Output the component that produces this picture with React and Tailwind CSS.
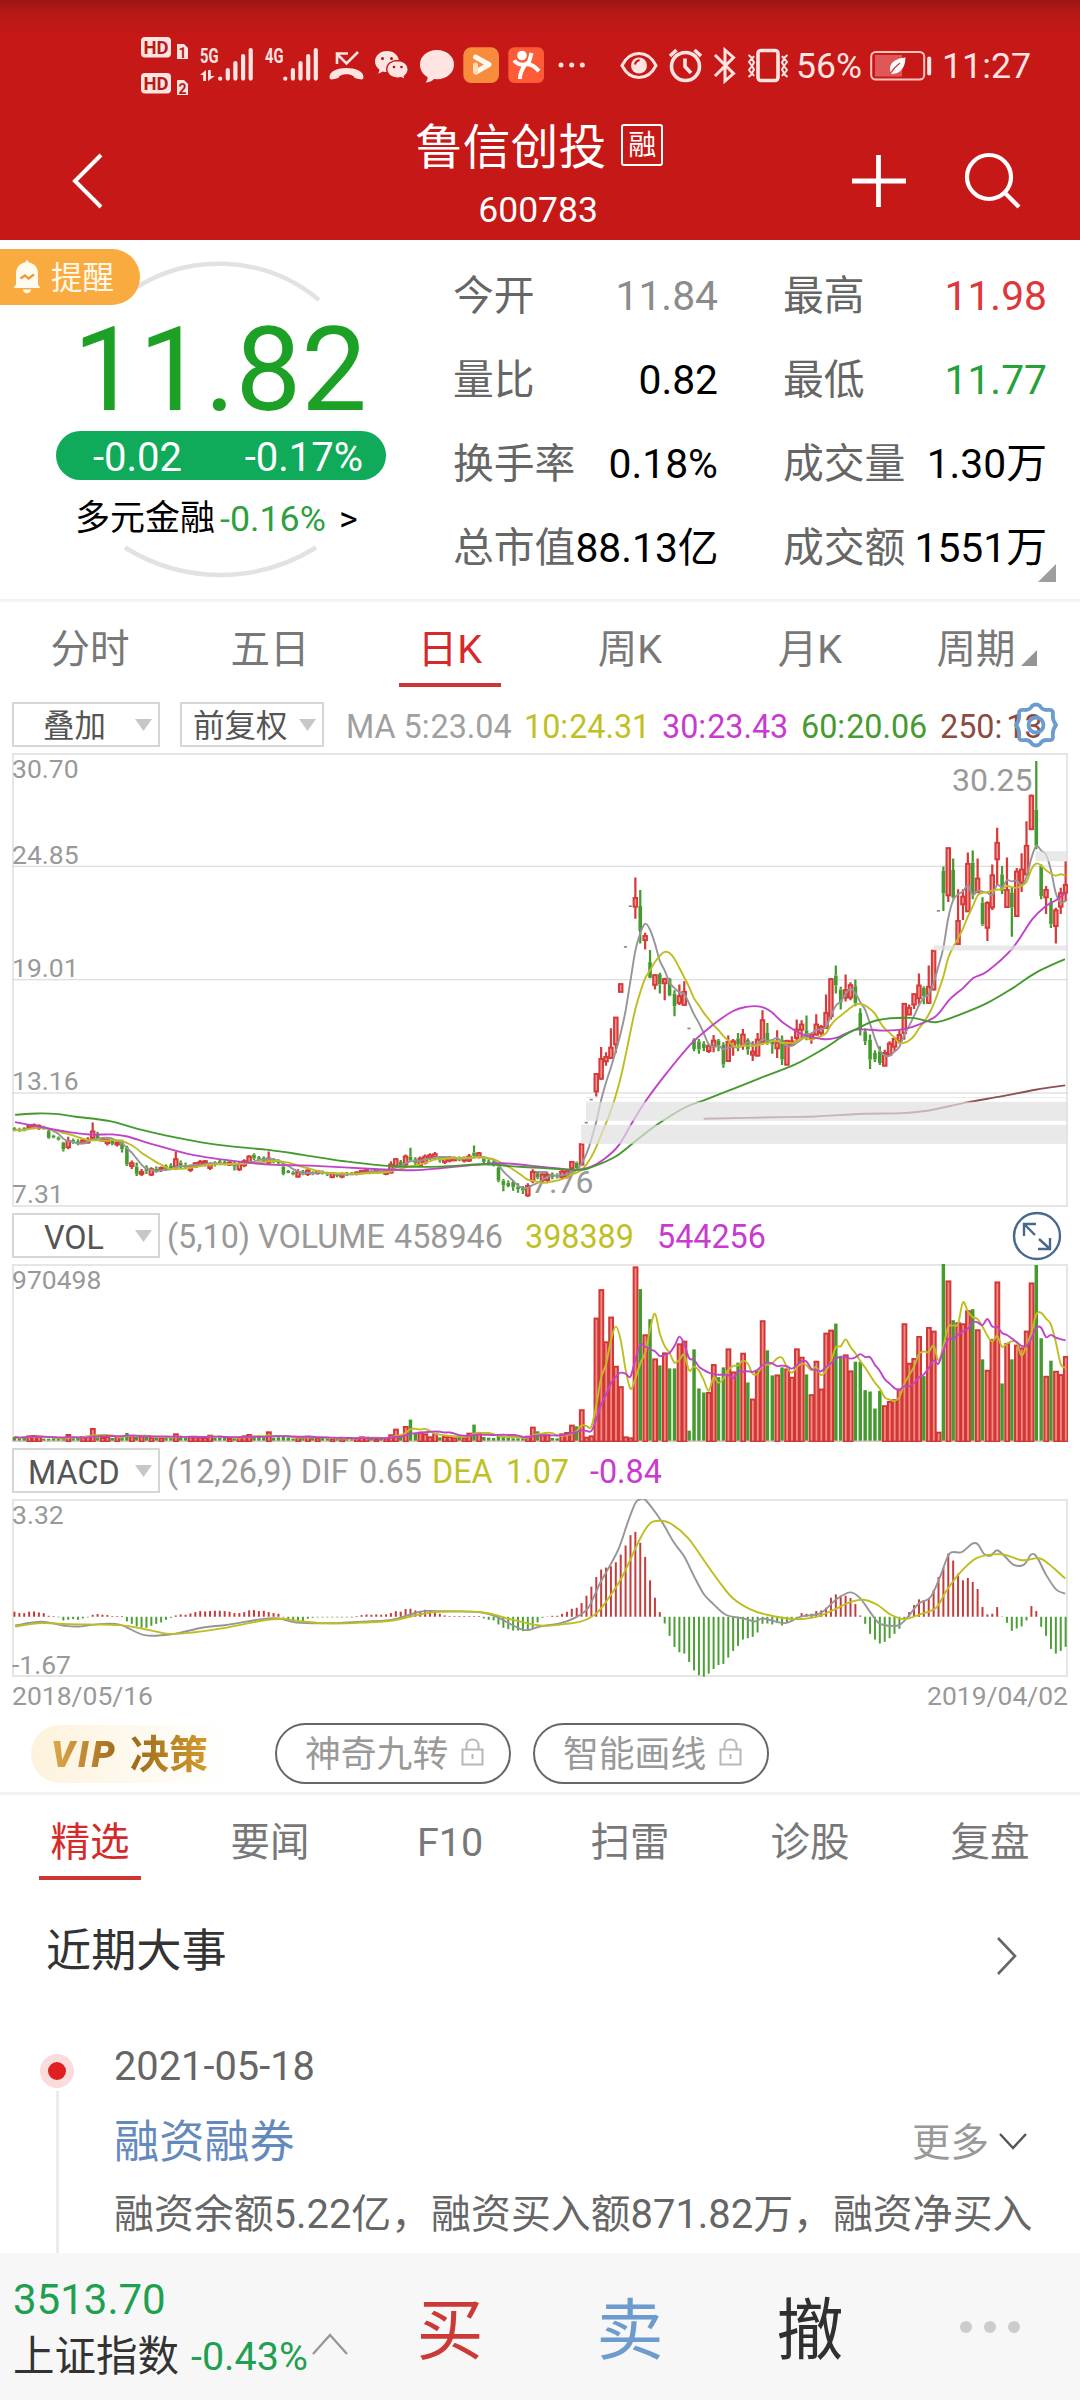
import React from "react";

const RED = "#d63a3a";
const GREEN = "#449a2e";
const GRAY = "#96969a";
const YELLOW = "#bebe20";
const PURPLE = "#c044c8";

// chart space: 216 bars, 14.2 units each, starting at x = 35
const STEP = 14.2;
const cx = (i) => 35 + STEP * (i + 0.5);

// r = up, g = down, d/e = limit day without a body; high, top, bottom, low
const candles = `
g1162,1165,1170,1174 g1164,1167,1172,1176 g1162,1165,1170,1174 r1153,1157,1164,1170 r1151,1156,1163,1168 r1154,1158,1165,1170 g1158,1161,1168,1170 g1170,1174,1194,1197
g1185,1187,1193,1195 g1190,1193,1199,1202 g1206,1208,1228,1235 r1191,1204,1222,1228 g1196,1200,1208,1212 g1198,1204,1212,1216 r1196,1202,1210,1212 r1192,1200,1208,1211
r1148,1175,1194,1198 g1176,1184,1196,1200 r1194,1197,1202,1206 r1196,1201,1210,1217 g1198,1202,1212,1216 r1202,1208,1214,1220 g1200,1206,1228,1238 g1218,1222,1274,1278
r1262,1270,1278,1287 g1268,1280,1302,1308 r1287,1296,1302,1308 g1276,1282,1294,1302 r1282,1288,1304,1308 g1280,1286,1294,1298 r1280,1284,1290,1296 g1274,1278,1288,1293
g1270,1276,1286,1290 r1235,1258,1280,1290 g1262,1268,1278,1286 g1268,1274,1284,1288 r1274,1280,1290,1296 r1266,1270,1280,1284 r1260,1266,1274,1278 r1260,1264,1270,1280
r1268,1274,1284,1290 g1264,1268,1276,1280 g1260,1264,1272,1276 g1262,1266,1272,1276 r1264,1268,1274,1278 g1266,1270,1280,1292 r1266,1272,1288,1293 r1258,1264,1276,1282
r1246,1250,1266,1270 g1240,1244,1256,1260 g1248,1252,1258,1262 g1250,1254,1264,1268 r1235,1256,1268,1272 g1254,1258,1264,1270 g1258,1262,1270,1274 g1274,1280,1302,1306
g1290,1293,1299,1300 g1294,1297,1303,1306 r1288,1296,1310,1313 g1290,1294,1304,1306 r1288,1292,1302,1308 g1294,1297,1303,1306 r1290,1294,1300,1304 g1292,1295,1300,1304
g1296,1299,1304,1308 r1296,1300,1311,1315 g1300,1303,1308,1312 r1298,1302,1310,1315 g1296,1300,1304,1308 g1296,1299,1303,1306 r1294,1298,1302,1306 r1290,1293,1300,1302
r1286,1291,1297,1300 g1290,1292,1296,1300 r1290,1293,1298,1301 g1290,1292,1297,1300 r1288,1292,1302,1306 r1264,1274,1298,1300 r1254,1258,1278,1282 g1260,1266,1278,1282
r1244,1250,1274,1280 g1224,1250,1262,1264 g1252,1258,1270,1276 r1250,1256,1276,1280 r1244,1250,1268,1274 r1240,1246,1254,1260 r1236,1243,1252,1258 g1248,1252,1262,1268
r1250,1256,1266,1272 r1248,1254,1262,1268 r1250,1255,1261,1264 g1250,1254,1260,1264 r1250,1254,1262,1268 r1242,1250,1262,1266 g1217,1238,1248,1252 r1236,1240,1250,1256
g1250,1254,1266,1274 g1258,1264,1272,1276 g1262,1266,1276,1280 g1280,1284,1322,1327 g1317,1322,1336,1354 g1322,1328,1338,1342 g1322,1326,1342,1352 g1330,1340,1348,1358
g1338,1342,1352,1362 r1330,1338,1366,1371 r1288,1296,1322,1330 g1296,1300,1312,1318 r1300,1304,1320,1328 r1298,1305,1320,1330 g1298,1302,1312,1318 g1300,1304,1312,1316
r1290,1295,1312,1320 r1288,1294,1310,1316 r1263,1266,1285,1292 g1265,1268,1285,1288 r1210,1213,1274,1276 d1149 d1080 r1000,1003,1055,1070
r922,958,1017,1020 r938,952,965,978 r866,924,955,957 r832,834,914,940 r732,734,757,757 d623 d501 r415,476,502,538
g452,500,575,612 r580,590,602,630 g632,668,715,716 r705,707,736,750 g700,704,735,762 r715,719,731,782 g715,718,768,770 g752,762,800,830
r735,770,790,796 r725,757,796,797 e867 g896,900,928,935 g898,905,930,942 g905,912,925,935 r912,919,934,940 r886,903,920,938
g898,902,918,935 g908,915,975,984 r888,907,964,967 r898,905,918,948 g880,896,915,935 r868,885,917,930 g896,900,930,945 r905,936,945,964
r880,900,948,950 r812,842,908,915 g850,880,910,915 g898,903,915,942 r872,909,926,955 g888,900,960,976 r900,904,975,977 r890,905,915,920
r840,870,895,905 r842,855,870,900 g828,872,890,902 r880,885,895,912 r824,855,885,888 r856,862,880,888 r765,820,865,868 r716,719,830,840
g678,708,738,762 g742,750,790,810 r705,752,774,786 r728,737,774,782 g720,740,790,800 g806,820,870,888 g866,875,905,916 g885,900,960,988
g932,940,960,967 g920,935,970,976 r930,940,978,979 r905,912,945,948 r892,898,921,935 r870,886,905,912 r790,793,880,900 r795,805,825,826
r762,764,795,808 r702,738,776,794 g740,745,770,794 r678,742,790,792 r632,634,750,752 d515 g382,395,462,515 r325,327,468,488
g358,392,475,478 r450,545,614,616 r450,472,495,542 r340,374,516,518 g334,370,465,480 r358,418,458,462 g474,490,555,560 r486,491,565,605
r376,408,504,512 r266,311,360,440 g380,405,455,464 r355,452,503,505 g445,460,505,592 r386,397,530,532 r342,391,430,458 r246,320,405,410
r166,170,270,272 g66,212,320,330 g376,380,470,480 r440,452,474,524 g476,490,555,566 r505,513,560,612 r445,462,502,524 r366,437,460,486`
    .trim()
    .split(/\s+/)
    .map((s) => {
        const v = s.slice(1).split(",").map(Number);
        const kind = s[0];
        return {
            kind,
            up: kind === "r" || kind === "d",
            high: v[0],
            top: v[1],
            bottom: v[2],
            low: v[3],
            close: v.length === 1 ? v[0] : kind === "r" ? v[1] : v[2],
        };
    });

const volumes = [
    712, 716, 711, 708, 707, 710, 717, 717, 716, 716, 716, 704, 716, 715, 710, 709, 686, 713, 713, 710, 715, 711, 712, 700,
    708, 712, 708, 711, 713, 713, 714, 714, 715, 702, 712, 715, 711, 711, 712, 713, 706, 714, 711, 715, 716, 716, 712, 708,
    704, 712, 710, 713, 696, 714, 713, 712, 713, 717, 712, 714, 709, 713, 714, 715, 717, 716, 718, 715, 718, 717, 715, 711,
    712, 717, 717, 716, 715, 705, 688, 710, 680, 660, 700, 697, 702, 711, 702, 713, 710, 710, 714, 708, 714, 700, 675, 700,
    712, 714, 715, 704, 712, 714, 716, 716, 715, 709, 682, 695, 705, 705, 715, 716, 702, 698, 676, 680, 630, 712, 708, 356,
    271, 427, 353, 500, 561, 711, 714, 203, 270, 406, 360, 478, 498, 460, 507, 507, 433, 425, 693, 450, 567, 579, 578, 495,
    533, 504, 448, 517, 490, 461, 549, 598, 515, 364, 453, 528, 526, 504, 508, 533, 448, 473, 525, 585, 485, 568, 401, 392,
    373, 470, 466, 514, 487, 487, 572, 576, 627, 574, 618, 605, 600, 568, 373, 491, 477, 411, 530, 384, 395, 697, 195, 245,
    363, 370, 373, 334, 330, 391, 480, 512, 420, 248, 552, 432, 480, 437, 445, 395, 251, 198, 417, 530, 484, 515, 525, 471,
];

const macdBars = [
    1236, 1240, 1240, 1236, 1235, 1238, 1240, 1248, 1249, 1253, 1262, 1260, 1258, 1260, 1256, 1253, 1245, 1243, 1245, 1246, 1249, 1249, 1249, 1265,
    1272, 1280, 1284, 1284, 1278, 1272, 1268, 1260, 1254, 1247, 1244, 1245, 1241, 1237, 1234, 1235, 1234, 1233, 1233, 1234, 1236, 1240, 1240, 1237,
    1232, 1231, 1234, 1233, 1237, 1240, 1242, 1253, 1260, 1264, 1262, 1264, 1257, 1254, 1253, 1253, 1253, 1253, 1253, 1253, 1253, 1253, 1249, 1246,
    1244, 1245, 1244, 1245, 1244, 1240, 1234, 1236, 1228, 1227, 1232, 1234, 1230, 1232, 1238, 1242, 1247, 1249, 1249, 1249, 1249, 1249, 1249, 1249,
    1256, 1260, 1262, 1274, 1284, 1288, 1292, 1292, 1294, 1293, 1284, 1268, 1254, 1250, 1248, 1248, 1242, 1236, 1227, 1224, 1210, 1188, 1161, 1132,
    1110, 1104, 1100, 1088, 1065, 1038, 1007, 997, 1030, 1072, 1142, 1194, 1237, 1271, 1308, 1341, 1357, 1361, 1386, 1411, 1426, 1430, 1421, 1407,
    1395, 1392, 1373, 1353, 1338, 1319, 1315, 1311, 1298, 1272, 1271, 1274, 1270, 1277, 1270, 1265, 1256, 1240, 1242, 1242, 1234, 1232, 1224, 1194,
    1184, 1188, 1188, 1195, 1213, 1247, 1272, 1302, 1319, 1331, 1326, 1315, 1302, 1287, 1260, 1237, 1216, 1199, 1201, 1196, 1171, 1132, 1104, 1062,
    1083, 1122, 1142, 1135, 1147, 1168, 1222, 1244, 1242, 1222, 1250, 1269, 1293, 1286, 1280, 1262, 1219, 1234, 1281, 1308, 1347, 1361, 1353, 1341,
];

const ma30 = "44,1147 120,1162 200,1177 260,1184 330,1184 370,1190 450,1215 560,1245 700,1266 800,1275 900,1277 1100,1288 1200,1291 1280,1285 1380,1275 1460,1270 1568,1280 1668,1290 1713,1282 1758,1255 1798,1215 1838,1145 1878,1080 1938,998 2008,912 2068,858 2128,815 2168,802 2208,801 2238,815 2278,852 2328,883 2388,898 2428,895 2488,870 2568,873 2628,868 2668,855 2718,830 2758,780 2798,745 2828,715 2868,695 2938,630 2998,540 3038,500 3068,482 3094,462";
const ma60 = "44,1125 110,1121 170,1123 220,1131 320,1144 400,1167 520,1195 640,1216 780,1230 880,1245 1000,1264 1140,1279 1280,1280 1400,1273 1500,1280 1568,1284 1678,1290 1718,1282 1788,1250 1848,1202 1908,1155 1988,1104 2048,1080 2128,1048 2208,1015 2308,975 2388,930 2448,890 2488,868 2548,842 2648,835 2718,848 2788,825 2868,790 2938,748 3008,700 3093,659";
const ma250 = "2044,1137 2268,1132 2368,1130 2508,1122 2618,1120 2698,1112 2808,1088 2908,1070 3008,1050 3094,1037";
const dif = "44,1277 120,1266 190,1278 230,1280 290,1273 350,1275 420,1306 500,1303 590,1283 660,1275 760,1258 810,1256 860,1268 960,1270 1080,1264 1140,1260 1220,1236 1270,1234 1390,1237 1440,1250 1520,1290 1568,1280 1628,1270 1668,1255 1708,1225 1743,1150 1768,1105 1798,1045 1823,970 1845,912 1859,900 1874,901 1903,938 1930,980 1958,1030 1987,1070 2015,1128 2044,1183 2072,1213 2108,1245 2158,1256 2193,1265 2218,1256 2278,1270 2328,1250 2383,1240 2428,1200 2468,1178 2498,1195 2528,1238 2553,1270 2583,1278 2613,1275 2638,1250 2668,1212 2703,1192 2733,1125 2758,1062 2793,1058 2823,1033 2840,1034 2858,1063 2878,1068 2896,1052 2918,1070 2943,1095 2973,1096 2996,1064 3013,1075 3038,1125 3068,1170 3094,1182";
const dea = "44,1280 120,1270 200,1273 350,1276 430,1290 490,1302 560,1298 650,1285 760,1263 820,1257 870,1264 960,1271 1060,1268 1140,1262 1220,1244 1280,1236 1400,1237 1470,1255 1568,1277 1628,1274 1688,1265 1733,1240 1768,1195 1808,1130 1858,1020 1888,972 1918,964 1948,972 1998,1015 2043,1080 2088,1145 2128,1195 2178,1228 2228,1245 2308,1258 2368,1252 2418,1232 2468,1208 2508,1200 2548,1215 2588,1245 2628,1258 2668,1245 2718,1225 2748,1175 2788,1120 2838,1075 2908,1064 2968,1082 3018,1076 3048,1095 3094,1137";

const parse = (s) => s.split(" ").map((p) => p.split(",").map(Number));

// moving average over the last n values, drawn at each bar's centre
const average = (values, n) =>
    values.map((_, i) => {
        const part = values.slice(Math.max(0, i - n + 1), i + 1);
        return [cx(i), part.reduce((a, b) => a + b, 0) / part.length];
    });

const smooth = (pts) => {
    let d = `M${pts[0][0]} ${pts[0][1]}`;
    for (let i = 0; i < pts.length - 1; i++) {
        const a = pts[i - 1] || pts[i];
        const b = pts[i];
        const c = pts[i + 1];
        const e = pts[i + 2] || c;
        d += `C${b[0] + (c[0] - a[0]) / 6} ${b[1] + (c[1] - a[1]) / 6} ${c[0] - (e[0] - b[0]) / 6} ${c[1] - (e[1] - b[1]) / 6} ${c[0]} ${c[1]}`;
    }
    return d;
};

const Line = ({ points, color }) => (
    <path d={smooth(points)} fill="none" stroke={color} strokeWidth="5.6" strokeLinejoin="round" />
);

const Plot = ({ viewBox, children }) => (
    <svg className="absolute left-[-2px] top-[-2px] w-[calc(100%+4px)] h-[calc(100%+4px)]" viewBox={viewBox} preserveAspectRatio="none">
        {children}
    </svg>
);

const closes = candles.map((c) => c.close);

const PriceChart = () => (
    <Plot viewBox="35 42 3067 1359">
        {[381, 721, 1060].map((y) => (
            <path key={y} d={`M35 ${y}H3102`} stroke="#d4d4d4" strokeWidth="3" />
        ))}
        <path d="M1702 1073H3102" stroke="#ebebeb" strokeWidth="3" />
        {candles.map((c, i) => {
            const x = cx(i);
            if (c.kind === "d" || c.kind === "e") {
                return <rect key={i} x={x - 5} y={c.high - 3} width="9" height="5" fill="#8a8a8a" />;
            }
            const color = c.up ? RED : GREEN;
            return (
                <g key={i}>
                    <path d={`M${x} ${c.high}V${c.top}M${x} ${c.bottom}V${c.low}`} stroke={color} strokeWidth="6.5" />
                    {c.up ? (
                        <rect x={x - 5} y={c.top} width="10" height={Math.max(c.bottom - c.top, 4)} fill="#f9a097" stroke={color} strokeWidth="6" />
                    ) : (
                        <rect x={x - 5.2} y={c.top} width="10.4" height={c.bottom - c.top} fill={color} />
                    )}
                </g>
            );
        })}
        <Line points={average(closes, 5)} color={GRAY} />
        <Line points={average(closes, 10)} color={YELLOW} />
        <Line points={parse(ma30)} color={PURPLE} />
        <Line points={parse(ma60)} color={GREEN} />
        <Line points={parse(ma250)} color="#8e5050" />
        <g fill="#e0e0e0" fillOpacity="0.7">
            <rect x="1702" y="1086" width="1400" height="57" />
            <rect x="1688" y="1155" width="1414" height="57" />
            <rect x="2713" y="618" width="389" height="15" />
            <rect x="3008" y="336" width="94" height="30" />
        </g>
    </Plot>
);

const VolumeChart = () => (
    <Plot viewBox="35 195 3067 532">
        {volumes.map((y, i) =>
            candles[i].up ? (
                <rect key={i} x={cx(i) - 5} y={y + 2} width="11" height={724 - y} fill="#f58a80" stroke="#d03838" strokeWidth="5.8" />
            ) : (
                <rect key={i} x={cx(i) - 5} y={y} width="10" height={723 - y} fill={GREEN} />
            )
        )}
        <path d="M35 725H3102" stroke="#c43c3c" strokeWidth="2" strokeOpacity="0.35" />
        <Line points={average(volumes, 5)} color={YELLOW} />
        <Line points={average(volumes, 10)} color={PURPLE} />
    </Plot>
);

const MacdChart = () => (
    <Plot viewBox="35 899 3067 532">
        {macdBars.map((y, i) => (
            <path key={i} d={`M${cx(i)} 1251V${y}`} stroke={y < 1251 ? "#c43c3c" : "#4c9f35"} strokeWidth="5.8" />
        ))}
        <Line points={parse(dif)} color={GRAY} />
        <Line points={parse(dea)} color={YELLOW} />
    </Plot>
);

const SignalBars = ({ x }) => (
    <g stroke="#ffe4e2" strokeWidth="4.2" strokeLinecap="round">
        <path d={`M${x} 78.6v.1M${x + 7.6} 70v8.6M${x + 15.2} 63v15.6M${x + 22.9} 56v22.6M${x + 30.5} 50v28.6`} />
    </g>
);

const StatusBar = () => (
    <div className="flex h-[64px] mt-[34px] pl-[138px] text-[#ffe4e2]">
        <svg width="54" height="64" viewBox="138 34 54 64" fill="#ffe4e2">
            <rect x="141" y="37" width="30" height="20.5" rx="4" />
            <rect x="141" y="73" width="30" height="20.5" rx="4" />
            <path d="M177 44h7l4 4v11h-11zM177 80h7l4 4v11h-11z" />
            <g fill="#b81a18" fontFamily="Roboto" fontWeight="700">
                <text x="143.5" y="53.8" fontSize="18.5">HD</text>
                <text x="143.5" y="89.8" fontSize="18.5">HD</text>
                <text x="178.5" y="57.5" fontSize="14">1</text>
                <text x="178.5" y="93.5" fontSize="14">2</text>
            </g>
        </svg>
        <svg width="66" height="64" viewBox="192 34 66 64" fill="#ffe4e2">
            <text x="200" y="62.5" fontSize="20" fontWeight="700" fontFamily="Roboto" textLength="18.5" lengthAdjust="spacingAndGlyphs">5G</text>
            <path d="M200 75l6-5v11h-2.800v-6zM208 70h2.800v6h4l-6.800 5z" />
            <SignalBars x={220.2} />
        </svg>
        <svg width="64" height="64" viewBox="258 34 64 64" fill="#ffe4e2">
            <text x="265" y="62.5" fontSize="20" fontWeight="700" fontFamily="Roboto" textLength="18.5" lengthAdjust="spacingAndGlyphs">4G</text>
            <SignalBars x={285.3} />
        </svg>
        <svg width="48" height="64" viewBox="322 34 48 64" fill="none" stroke="#ffe4e2" strokeWidth="2.6">
            <path d="M337 64V53.500h11M337 54l9.500 9.500L358 52" />
            <path d="M329.500 77c0-12 34-12 34 0 0 3-2 3-9 1-1.500-5-14.500-5-16 0-7 2-9 2-9-1z" fill="#ffe4e2" stroke="none" />
        </svg>
        <svg width="46" height="64" viewBox="370 34 46 64" fill="#ffe4e2">
            <path d="M387 51c-7 0-12 5-12 10.500 0 3.500 2 6.200 4.500 8.200l-1.200 4 4.500-2.300c1.200.4 2.700.6 4.200.6 7 0 12-5 12-10.500S394 51 387 51z" />
            <path d="M397.500 60.500c-6.300 0-10.800 4-10.800 8.800s4.500 8.900 10.800 8.900c1.300 0 2.600-.2 3.800-.5l4 2-1-3.500c2.400-1.700 3.900-4.100 3.900-6.900 0-4.800-4.500-8.800-10.700-8.800z" stroke="#c61817" strokeWidth="1.3" />
            <g fill="#9b1a18">
                <circle cx="382.5" cy="58.5" r="1.5" />
                <circle cx="391.5" cy="58.5" r="1.5" />
                <circle cx="394" cy="67" r="1.3" />
                <circle cx="401.5" cy="67" r="1.3" />
            </g>
        </svg>
        <svg width="44" height="64" viewBox="416 34 44 64" fill="#ffe4e2">
            <path d="M437 50c-10 0-17 6.500-17 14.500 0 5.500 3 10 7.500 12.500.3 2-.5 4-2 5.500 3.500 0 6.500-1.500 8.500-3.500l3 .2c10 0 17-6.700 17-14.700S447 50 437 50z" />
        </svg>
        <svg width="44" height="64" viewBox="460 34 44 64" fill="none">
            <rect x="463.3" y="47.3" width="35.7" height="35.7" rx="8" fill="#f98b3d" />
            <path d="M475.500 57l13.500 7.500-13 7.500" stroke="#fff8ee" strokeWidth="5" strokeLinejoin="round" strokeLinecap="round" />
            <path d="M475.500 72v-7" stroke="#ffdcb8" strokeWidth="5" strokeLinecap="round" />
        </svg>
        <svg width="46" height="64" viewBox="504 34 46 64" fill="none">
            <rect x="508.3" y="47.3" width="35.7" height="35.7" rx="6" fill="#fd5c36" />
            <circle cx="522" cy="55.5" r="4.8" fill="#fff" />
            <path d="M514 60.500c5 5.500 11 5.500 15 1.500l2.500-9M525 65c-3 4-5 8-5 14M526 64c6 0 9 3 13 7" stroke="#fff" strokeWidth="4" strokeLinejoin="round" />
        </svg>
        <svg width="66" height="64" viewBox="550 34 66 64" fill="#ffe4e2">
            <circle cx="561" cy="65" r="2.5" />
            <circle cx="571.7" cy="65" r="2.5" />
            <circle cx="582.3" cy="65" r="2.5" />
        </svg>
        <svg width="48" height="64" viewBox="616 34 48 64" fill="none" stroke="#ffe4e2" strokeWidth="3">
            <path d="M622 65.500c8-16 26-16 34 0-8 16-26 16-34 0z" />
            <circle cx="639" cy="65.5" r="8" fill="#ffe4e2" stroke="none" />
            <path d="M635 64.500c.5-2.500 2-4 4.500-4.500" stroke="#c61817" strokeWidth="2" />
        </svg>
        <svg width="46" height="64" viewBox="664 34 46 64" fill="none" stroke="#ffe4e2" strokeWidth="3.6">
            <circle cx="685.5" cy="66.5" r="14" />
            <path d="M685 58.500v8l6 6.500M670 56l6.500-6M701 56l-6.500-6" />
        </svg>
        <svg width="32" height="64" viewBox="710 34 32 64" fill="none" stroke="#ffe4e2" strokeWidth="3">
            <path d="M715 55l18.500 18.500-8.500 7.500V50l8.500 7.500L715 76" />
        </svg>
        <svg width="54" height="64" viewBox="742 34 54 64" fill="none" stroke="#ffe4e2" strokeWidth="3">
            <rect x="758" y="50.5" width="20" height="30" rx="3" strokeWidth="3.6" />
            <path d="M748.500 55l3.500 3-3 4 3 4-3 4 3 4-3.500 3M754 56l-2 3 2 3.500-2 3.500 2 3.500-2 3.500 2 3M787.500 55l-3.500 3 3 4-3 4 3 4-3 4 3.500 3M782 56l2 3-2 3.500 2 3.500-2 3.500 2 3.500-2 3" strokeWidth="2" />
        </svg>
        <span className="w-[72px] text-[35.5px] leading-[65px]">56%</span>
        <svg width="74" height="64" viewBox="868 34 74 64" fill="none">
            <rect x="871.2" y="52" width="53" height="27.5" rx="4.5" stroke="#ffc3bd" strokeWidth="2" />
            <rect x="875" y="55" width="27" height="21.5" fill="#df5756" />
            <path d="M905.500 57.500c-10 1-16 5-15.500 12l1 4.500c9 0 14-5 14.500-16.500z" fill="#fff" />
            <path d="M890 74c3-5 6-8 10-11" stroke="#d33a3a" strokeWidth="1.3" />
            <path d="M929.200 58.500v15" stroke="#ffe4e2" strokeWidth="4" strokeLinecap="round" />
        </svg>
        <span className="text-[35.8px] leading-[65px]">11:27</span>
    </div>
);

const Header = () => (
    <header className="h-[240px] overflow-hidden bg-[#c61817] bg-[linear-gradient(#9c1613_0px,#b51817_12px,#c61817_36px)] text-white">
        <StatusBar />
        <div className="flex h-[142px]">
            <svg className="ml-[68px] mt-[52px]" width="40" height="60" viewBox="0 0 40 60" fill="none" stroke="#fff" strokeWidth="4">
                <path d="M33 5L7 31l26 26" />
            </svg>
            <div className="ml-[305px] flex flex-col items-center">
                <div className="flex items-center h-[96px] pt-[6px] pl-[2px]">
                    <h1 className="text-[47.8px] leading-none">鲁信创投</h1>
                    <span className="ml-[15px] mt-[-8px] w-[42px] h-[42px] rounded-[3px] border-2 border-white text-[28px] leading-[40px] text-center">融</span>
                </div>
                <div className="text-[35.5px] leading-[32px]">600783</div>
            </div>
            <div className="flex mt-[52px] ml-auto mr-[56px] gap-[55px]">
                <svg width="60" height="60" viewBox="0 0 60 60" stroke="#fff" strokeWidth="4.8">
                    <path d="M3 31h54M29.500 5v52" />
                </svg>
                <svg width="60" height="60" viewBox="0 0 60 60" fill="none" stroke="#fff" strokeWidth="4.2">
                    <circle cx="25" cy="27" r="22" />
                    <path d="M40 42l15 15" />
                </svg>
            </div>
        </div>
    </header>
);

const stats = [
    ["今开", "11.84", "text-[#8c8c8c]", "最高", "11.98", "text-[#e0353a]"],
    ["量比", "0.82", "text-black", "最低", "11.77", "text-[#26a038]"],
    ["换手率", "0.18%", "text-black", "成交量", "1.30万", "text-black"],
    ["总市值", "88.13亿", "text-black", "成交额", "1551万", "text-black"],
];

const Quote = () => (
    <section className="relative flex h-[362px] border-b-3 border-[#f3f3f3]">
        <svg className="absolute left-0 top-0" width="440" height="360" viewBox="0 240 440 360" fill="none" stroke="#e2e2e2" strokeWidth="4.5">
            <path d="M128 293A156 156 0 0 1 319 300M125 547.500A180 180 0 0 0 316 547.500" />
        </svg>
        <div className="relative w-[453px]">
            <div className="mt-[9px] w-[140px] h-[56px] rounded-r-full bg-[#faab40] flex items-center text-[#fff8e8]">
                <svg className="ml-[12px]" width="30" height="38" viewBox="0 0 30 38" fill="#fffaf0">
                    <path d="M15 1.500l2 3c6 1 9 6 9 11v11l2.500 3.500h-27L4 26.500v-11c0-5 3-10 9-11zM11 31.500h8c0 5-8 5-8 0z" />
                    <path d="M8.500 20.500l4.500-3 3.500 3 5.500-4" fill="none" stroke="#e99a30" strokeWidth="2.2" />
                </svg>
                <span className="ml-[9px] mt-[3px] text-[31.5px] leading-none">提醒</span>
            </div>
            <div className="mt-[5px] w-[440px] h-[121px] text-center text-[117px] leading-[121px] text-[#1ca026]">11.82</div>
            <div className="ml-[56px] w-[330px] h-[49px] rounded-full bg-[#0fab5b] flex justify-between pl-[37px] pr-[23px] text-white text-[40px] leading-[54px]">
                <span>-0.02</span>
                <span>-0.17%</span>
            </div>
            <div className="mt-[16px] ml-[75px] flex items-center h-[46px] text-[35.8px] leading-[46px]">
                <span className="text-black w-[145px] text-[35px]">多元金融</span>
                <span className="text-[#2f9f40]">-0.16%</span>
                <span className="ml-[13px] text-black">&gt;</span>
            </div>
        </div>
        <div className="mt-[14px] flex flex-col text-[40.8px] leading-[84px]">
            {stats.map(([a, av, ac, b, bv, bc]) => (
                <div key={a} className="flex h-[84px] whitespace-nowrap">
                    <div className="flex w-[265px] justify-between">
                        <span className="text-[#666]">{a}</span>
                        <span className={ac}>{av}</span>
                    </div>
                    <div className="ml-[65px] flex w-[264px] justify-between">
                        <span className="text-[#666]">{b}</span>
                        <span className={bc}>{bv}</span>
                    </div>
                </div>
            ))}
        </div>
        <svg className="absolute left-[1038px] top-[324px]" width="18" height="18">
            <path d="M18 0v18H0z" fill="#9e9e9e" />
        </svg>
    </section>
);

const Tabs = ({ items, active }) => (
    <nav className="grid grid-cols-6 h-[92px] text-[39.5px] text-[#787878]">
        {items.map((t) => (
            <div key={t} className="flex flex-col items-center">
                <span className={t === active ? "h-[81px] leading-[95px] text-[#d62a2a]" : "h-[81px] leading-[95px]"}>
                    {t}
                    {t === "周期" && (
                        <svg className="inline-block ml-[5px] mr-[7px] align-[-3px]" width="16" height="16">
                            <path d="M16 0v16H0z" fill="#949494" />
                        </svg>
                    )}
                </span>
                {t === active && <i className="w-[102px] h-[4px] bg-[#d03535]" />}
            </div>
        ))}
    </nav>
);

const Picker = ({ label, className }) => (
    <div className={`flex items-center justify-between h-[45px] border-2 border-[#d6d6d6] text-[#555] leading-none ${className}`}>
        <span className="pt-[5px]">{label}</span>
        <svg width="17" height="12">
            <path d="M0 0h17L8.500 12z" fill="#c4c8c8" />
        </svg>
    </div>
);

const Frame = ({ className, children }) => (
    <div className={`relative mx-[12px] border-2 border-[#e6e6e6] text-[26.5px] leading-[30px] text-[#999] ${className}`}>
        {children}
    </div>
);

const Charts = () => (
    <section className="text-[32.3px]">
        <div className="flex items-center h-[45px] mt-[8px] ml-[12px] whitespace-nowrap">
            <Picker label="叠加" className="w-[148px] pl-[29px] pr-[6px] text-[31.5px]" />
            <Picker label="前复权" className="ml-[20px] w-[144px] pl-[11px] pr-[6px] text-[31.5px]" />
            <span className="pt-[5px] ml-[22px] w-[178px] text-[#a0a0a0]">MA 5:<span className="ml-px">23.04</span></span>
            <span className="pt-[5px] w-[138px] text-[#c0c024]">10:<span className="ml-px">24.31</span></span>
            <span className="pt-[5px] w-[139px] text-[#c83ad0]">30:<span className="ml-px">23.43</span></span>
            <span className="pt-[5px] w-[139px] text-[#459a30]">60:<span className="ml-px">20.06</span></span>
            <span className="pt-[5px] w-[104px] text-[#8c4a40]">250:<span className="ml-[4px]">13</span></span>
            <svg className="ml-[-30px]" width="44" height="46" viewBox="-22 -23 44 46" fill="none" stroke="#6c9bcf" strokeWidth="3.8">
                <path d="M-20 0Q-16-5-17-12Q-17-16-11-15Q-6-15-4-19Q0-22 4-19Q6-15 11-15Q17-16 17-12Q16-5 20 0Q16 5 17 12Q17 16 11 15Q6 15 4 19Q0 22-4 19Q-6 15-11 15Q-17 16-17 12Q-16 5-20 0Z" />
                <circle r="7.5" />
            </svg>
        </div>
        <Frame className="mt-[6px] h-[454px]">
            <span className="absolute left-[-2px] top-[-1px]">30.70</span>
            <span className="absolute left-[-2px] top-[85px]">24.85</span>
            <span className="absolute left-[-2px] top-[198px]">19.01</span>
            <span className="absolute left-[-2px] top-[311px]">13.16</span>
            <span className="absolute left-[-2px] top-[424px]">7.31</span>
            <span className="absolute left-[938px] top-[10px] text-[32px]">30.25</span>
            <span className="absolute left-[517px] top-[412px] text-[32px]">7.76</span>
            <PriceChart />
        </Frame>
        <div className="flex items-center h-[45px] mt-[6px] ml-[12px] text-[#999] whitespace-nowrap">
            <Picker label="VOL" className="w-[148px] pl-[30px] pr-[6px]" />
            <span className="pt-[4px] ml-[7px] w-[227px]">(5,10) VOLUME</span>
            <span className="pt-[4px] w-[131px]">458946</span>
            <span className="pt-[4px] w-[132px] text-[#c0c024]">398389</span>
            <span className="pt-[4px] text-[#c83ad0]">544256</span>
            <svg className="ml-auto mr-[18px]" width="50" height="50" viewBox="-25 -25 50 50" fill="none" stroke="#47688f" strokeWidth="2.4">
                <circle r="23" />
                <path d="M-2-1l-11-11M-13 0v-12h12M2 3l11 10M13 2v11H1" />
            </svg>
        </div>
        <Frame className="mt-[6px] h-[178px]">
            <span className="absolute left-[-2px] top-[-1px]">970498</span>
            <VolumeChart />
        </Frame>
        <div className="flex items-center h-[45px] mt-[6px] ml-[12px] text-[#999] whitespace-nowrap">
            <Picker label="MACD" className="w-[148px] pl-[14px] pr-[6px]" />
            <span className="pt-[4px] ml-[7px] w-[192px]">(12,26,9) DIF</span>
            <span className="pt-[4px] w-[73px]">0.65</span>
            <span className="pt-[4px] w-[74px] text-[#c0c024]">DEA</span>
            <span className="pt-[4px] w-[84px] text-[#c0c024]">1.07</span>
            <span className="pt-[4px] text-[#c83ad0]">-0.84</span>
        </div>
        <Frame className="mt-[6px] h-[178px]">
            <span className="absolute left-[-2px] top-[-1px]">3.32</span>
            <span className="absolute left-[-2px] top-[149px]">-1.67</span>
            <MacdChart />
        </Frame>
        <div className="flex justify-between mx-[12px] mt-[2px] text-[26.5px] leading-[34px] text-[#999]">
            <span>2018/05/16</span>
            <span>2019/04/02</span>
        </div>
    </section>
);

const LockButton = ({ label }) => (
    <button className="flex items-center w-[236px] h-[61px] mt-[2px] pl-[28px] rounded-full border-2 border-[#666] text-[35.8px] leading-none text-[#999]">
        <span className="pt-[4px]">{label}</span>
        <svg className="ml-[13px] mt-[-3px]" width="23" height="28" viewBox="0 0 23 28" fill="none" stroke="#b8b8b8" strokeWidth="2">
            <path d="M1.500 11.500h20v15h-20zM5.500 11V7.500c0-8 12-8 12 0V11M11.500 16v5" />
        </svg>
    </button>
);

const Tools = () => (
    <section className="flex h-[74px] mt-[8px] border-b-3 border-[#f3f3f3]">
        <div className="ml-[31px] mt-[4px] w-[244px] h-[58px] rounded-l-full bg-linear-to-r from-[#fdf3dc] to-white to-80% flex items-center pl-[20px] leading-none">
            <span className="font-black italic text-[37px] tracking-[3px] text-transparent bg-clip-text bg-linear-to-r from-[#dfa84c] to-[#9c6a1c] pr-1">VIP</span>
            <span className="ml-[8px] pt-[3px] font-bold text-[39px] text-transparent bg-clip-text bg-linear-to-r from-[#9c6a1c] to-[#d39a2e]">决策</span>
        </div>
        <LockButton label="神奇九转" />
        <div className="w-[22px]" />
        <LockButton label="智能画线" />
    </section>
);

const Events = () => (
    <section className="h-[366px] overflow-hidden">
        <div className="flex items-center justify-between h-[126px] pl-[46px] pr-[61px]">
            <h2 className="pt-[4px] text-[45.2px] leading-none text-[#333]">近期大事</h2>
            <svg className="mt-[12px]" width="24" height="40" viewBox="0 0 24 40" fill="none" stroke="#666" strokeWidth="2.6">
                <path d="M3 2l17 18L3 38" />
            </svg>
        </div>
        <div className="flex">
            <div className="w-[114px] flex flex-col items-center">
                <div className="mt-[41px] w-[34px] h-[34px] rounded-full bg-[#fbdcdc] flex items-center justify-center">
                    <i className="w-[18px] h-[18px] rounded-full bg-[#e02020]" />
                </div>
                <i className="mt-[3px] w-[3px] h-[170px] bg-[#ececec]" />
            </div>
            <div className="flex-1 whitespace-nowrap text-[#666]">
                <div className="mt-[27px] h-[54px] text-[39.8px] leading-[54px]">2021-05-18</div>
                <div className="mt-[19px] flex justify-between h-[60px] pr-[52px] items-center">
                    <span className="text-[45.2px] leading-none text-[#6489bd]">融资融券</span>
                    <span className="flex items-center text-[38.5px] text-[#999] leading-none">
                        更多
                        <svg className="ml-[9px] mt-[-4px]" width="30" height="20" viewBox="0 0 30 20" fill="none" stroke="#555" strokeWidth="2.4">
                            <path d="M2 3l13 14L28 3" />
                        </svg>
                    </span>
                </div>
                <p className="mt-[14px] text-[39.9px] leading-[56px]">融资余额5.22亿，融资买入额871.82万，融资净买入</p>
            </div>
        </div>
    </section>
);

const BottomBar = () => (
    <footer className="flex h-[147px] bg-[#f7f7f7]">
        <div className="w-[360px] pl-[13px]">
            <div className="mt-[18px] h-[57px] text-[42px] leading-[57px] text-[#1f9f50]">3513.70</div>
            <div className="flex items-center h-[58px] text-[#333]">
                <span className="w-[178px] text-[41.5px]">上证指数</span>
                <span className="text-[39.5px] text-[#1f9f50]">-0.43%</span>
                <svg className="ml-[3px] mt-[-26px]" width="38" height="24" viewBox="0 0 38 24" fill="none" stroke="#999" strokeWidth="2.4">
                    <path d="M2 22L19 3l17 19" />
                </svg>
            </div>
        </div>
        <div className="w-[180px] text-center text-[67px] leading-[156px] text-[#cc3a36]">买</div>
        <div className="w-[180px] text-center text-[67px] leading-[156px] text-[#6e9bce]">卖</div>
        <div className="w-[180px] text-center text-[67px] leading-[156px] text-[#303030]">撤</div>
        <div className="w-[180px] flex items-center justify-center gap-[12px]">
            <i className="w-[12px] h-[12px] rounded-full bg-[#ccc]" />
            <i className="w-[12px] h-[12px] rounded-full bg-[#ccc]" />
            <i className="w-[12px] h-[12px] rounded-full bg-[#ccc]" />
        </div>
    </footer>
);

export default function App() {
    return (
        <div className="w-[1080px] h-[2400px] overflow-hidden bg-white font-['Roboto','Noto_Sans_CJK_SC',sans-serif]">
            <Header />
            <Quote />
            <Tabs items={["分时", "五日", "日K", "周K", "月K", "周期"]} active="日K" />
            <Charts />
            <Tools />
            <Tabs items={["精选", "要闻", "F10", "扫雷", "诊股", "复盘"]} active="精选" />
            <Events />
            <BottomBar />
        </div>
    );
}
